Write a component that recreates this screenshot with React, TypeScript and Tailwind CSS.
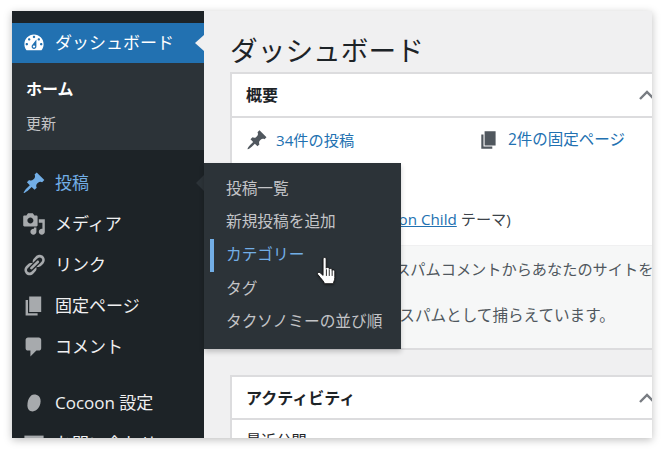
const fontStack = { fontFamily: '"Open Sans", "Noto Sans CJK JP", sans-serif' };

const ICONS: Record<string, string> = {
  dashboard:
    'M3.76 16h12.48c1.1-1.37 1.76-3.11 1.76-5 0-4.42-3.58-8-8-8s-8 3.58-8 8c0 1.89.66 3.63 1.76 5zM10 4c.55 0 1 .45 1 1s-.45 1-1 1-1-.45-1-1 .45-1 1-1zM6 6c.55 0 1 .45 1 1s-.45 1-1 1-1-.45-1-1 .45-1 1-1zm8 0c.55 0 1 .45 1 1s-.45 1-1 1-1-.45-1-1 .45-1 1-1zm-5.37 5.55L12 7v6c0 1.1-.9 2-2 2s-2-.9-2-2c0-.57.24-1.08.63-1.45zM4 10c.55 0 1 .45 1 1s-.45 1-1 1-1-.45-1-1 .45-1 1-1zm12 0c.55 0 1 .45 1 1s-.45 1-1 1-1-.45-1-1 .45-1 1-1zm-5 3c0-.55-.45-1-1-1s-1 .45-1 1 .45 1 1 1 1-.45 1-1z',
  post: 'M10.44 3.02l1.82-1.82 6.36 6.35-1.83 1.82c-1.05-.68-2.48-.57-3.41.36l-.75.75c-.92.93-1.04 2.35-.35 3.41l-1.83 1.82-2.41-2.41-2.8 2.79c-.42.42-3.38 2.71-3.8 2.29s1.86-3.39 2.28-3.81l2.79-2.79L4.1 9.36l1.83-1.82c1.05.69 2.48.57 3.4-.36l.75-.75c.93-.92 1.05-2.35.36-3.41z',
  media:
    'M13 11V4c0-.55-.45-1-1-1h-1.67L9 1H5L3.67 3H2c-.55 0-1 .45-1 1v7c0 .55.45 1 1 1h10c.55 0 1-.45 1-1zM7 4.5c1.38 0 2.5 1.12 2.5 2.5S8.38 9.5 7 9.5 4.5 8.38 4.5 7 5.62 4.5 7 4.5zM14 6h5v10.5c0 1.38-1.12 2.5-2.5 2.5S14 17.88 14 16.5s1.12-2.5 2.5-2.5c.17 0 .34.02.5.05V9h-3V6zm-4 8.05V13h2v3.5c0 1.38-1.12 2.5-2.5 2.5S7 17.88 7 16.5 8.12 14 9.5 14c.17 0 .34.02.5.05z',
  link: 'M17.74 2.76c1.68 1.69 1.68 4.41 0 6.1l-1.53 1.52c-1.12 1.12-2.7 1.47-4.14 1.09l2.62-2.61.76-.77.76-.76c.84-.84.84-2.2 0-3.04-.84-.85-2.2-.85-3.04 0l-.77.76-3.38 3.38c-.37-1.44-.02-3.02 1.1-4.14l1.52-1.53c1.69-1.68 4.42-1.68 6.1 0zM8.59 13.43l5.34-5.34c.42-.42.42-1.1 0-1.52-.44-.43-1.13-.39-1.53 0l-5.33 5.34c-.42.42-.42 1.1 0 1.52.44.43 1.13.39 1.52 0zm-.76 2.29l4.14-4.15c.38 1.44.03 3.02-1.09 4.14l-1.52 1.53c-1.69 1.68-4.41 1.68-6.1 0-1.68-1.68-1.68-4.42 0-6.1l1.53-1.52c1.12-1.12 2.7-1.47 4.14-1.1l-4.14 4.15c-.85.84-.85 2.2 0 3.05.84.84 2.2.84 3.04 0z',
  page: 'M6 15V2h10v13H6zm-1 1h8v2H3V5h2v11z',
  comment:
    'M5 2h9c1.1 0 2 .9 2 2v7c0 1.1-.9 2-2 2h-2l-5 5v-5H5c-1.1 0-2-.9-2-2V4c0-1.1.9-2 2-2z',
  circle: 'M10 3c3.5 0 5.5 2.2 5.5 5.6 0 4.4-3.2 8.4-6.6 8.4-2.9 0-4.4-2.3-4.4-5.2C4.500 7.200 7 3 10 3z',
  rect: 'M2 3h16v14H2z',
};

function Icon({ name, className }: { name: string; className: string }) {
  return (
    <svg viewBox="0 0 20 20" className={className} fill="currentColor">
      <path d={ICONS[name]} fillRule="evenodd" />
    </svg>
  );
}

function MenuRow({ icon, label, active }: { icon: string; label: string; active?: boolean }) {
  return (
    <div className={`flex items-center h-[41px] pl-[10px] text-[17px] ${active ? 'text-[#72aee6]' : 'text-[#f0f0f1]'}`}>
      <Icon name={icon} className={`w-[24px] h-[24px] mr-[9px] shrink-0 ${active ? 'text-[#72aee6]' : 'text-[#a7aaad]'}`} />
      <span className="whitespace-nowrap">{label}</span>
    </div>
  );
}

function Sidebar() {
  return (
    <aside className="w-[192px] shrink-0 bg-[#1d2327] pt-[12px]">
      <div className="relative flex items-center h-[40px] pl-[10px] bg-[#2271b1] text-white text-[17px]">
        <Icon name="dashboard" className="w-[24px] h-[24px] mr-[9px]" />
        <span className="whitespace-nowrap">ダッシュボード</span>
        <div className="absolute right-0 top-[12px] w-0 h-0 border-y-[8px] border-y-transparent border-r-[9px] border-r-[#f0f0f1]" />
      </div>
      <div className="h-[87px] bg-[#2c3338] pl-[14px] pt-[13px]">
        <div className="text-[16px] leading-[26px] font-bold text-white">ホーム</div>
        <div className="text-[15px] leading-[26px] mt-[8px] text-[#c3c4c7]">更新</div>
      </div>
      <div className="pt-[12px] relative">
        <MenuRow icon="post" label="投稿" active />
        <div className="absolute right-0 top-[25px] w-0 h-0 border-y-[8px] border-y-transparent border-r-[8px] border-r-[#2c3338]" />
        <MenuRow icon="media" label="メディア" />
        <MenuRow icon="link" label="リンク" />
        <MenuRow icon="page" label="固定ページ" />
        <MenuRow icon="comment" label="コメント" />
        <div className="h-[15px]" />
        <MenuRow icon="circle" label="Cocoon 設定" />
        <MenuRow icon="rect" label="お問い合わせ" />
      </div>
    </aside>
  );
}

function Flyout() {
  const rows = ['投稿一覧', '新規投稿を追加', 'カテゴリー', 'タグ', 'タクソノミーの並び順'];
  return (
    <div className="absolute left-[192px] top-[152px] w-[197px] h-[186px] bg-[#2c3338] pt-[9px] shadow-[0_3px_5px_rgba(0,0,0,0.2)]">
      {rows.map((row, i) => (
        <div
          key={row}
          className={`relative flex items-center h-[33.300px] pl-[22px] text-[15.700px] whitespace-nowrap ${
            i === 2 ? 'text-[#72aee6]' : 'text-[#c3c4c7]'
          }`}
        >
          {i === 2 && <div className="absolute left-[6px] top-0 w-[4px] h-full bg-[#72aee6]" />}
          {row}
        </div>
      ))}
    </div>
  );
}

function Cursor() {
  return (
    <svg viewBox="0 0 20 28" className="absolute left-[304px] top-[245px] w-[23px] h-[31px]" style={{ filter: 'drop-shadow(0 1px 1px rgba(0,0,0,0.4))' }}>
      <path
        d="M6 2.500c0-1.600 2.800-1.600 2.800 0V11c0-.9 2.600-1 2.700 0v1c0-.9 2.500-.9 2.600.2v1c.2-.9 2.400-.8 2.500.4v5.900c0 2.500-1 3.200-1.300 5.500H7.300c-.6-2-2.200-3.500-3.800-5.500L1.200 16.700c-.9-1.300.8-2.700 2-1.700L6 17.500z"
        fill="#fff"
        stroke="#111"
        strokeWidth="0.800"
        strokeLinejoin="round"
      />
      <path d="M9 12v6M11.600 12.500v5.500M14.200 13.500v4.500" stroke="#111" strokeWidth="0.800" />
    </svg>
  );
}

function CardHeader({ title, height }: { title: string; height: string }) {
  return (
    <div className={`flex items-center justify-between border-b-2 border-[#dcdcde] pl-[14px] ${height}`}>
      <span className="text-[16px] font-bold text-[#1d2327]">{title}</span>
      <svg viewBox="0 0 16 10" className="w-[16px] h-[10px] shrink-0 text-[#787c82]" fill="none" stroke="currentColor" strokeWidth="2.400">
        <path d="M1 9l7-7 7 7" />
      </svg>
    </div>
  );
}

function Main() {
  return (
    <main className="flex-1 min-w-0 bg-[#f0f0f1] pl-[26px] overflow-hidden">
      <h1 className="text-[27.700px] leading-[38px] pt-[20px] h-[61px] text-[#1d2327] whitespace-nowrap">ダッシュボード</h1>
      <section className="w-[425px] h-[278px] bg-white border-2 border-[#dcdcde] border-r-0 flex flex-col">
        <CardHeader title="概要" height="h-[44px]" />
        <div className="h-[127px] pl-[14px] pt-[10px] text-[15.200px]">
          <div className="flex h-[24px] items-center text-[#2271b1]">
            <div className="flex items-center w-[232px]">
              <Icon name="post" className="w-[22px] h-[22px] mr-[8px] text-[#50575e]" />
              34件の投稿
            </div>
            <div className="flex items-center text-[15.500px]">
              <Icon name="page" className="w-[22px] h-[22px] mr-[8px] text-[#50575e]" />
              2件の固定ページ
            </div>
          </div>
          <div className="mt-[56px] -ml-[6px] whitespace-nowrap text-[#3c434a]">
            WordPress 5.9.3 (<span className="text-[#2271b1] underline">Cocoon Child</span> テーマ)
          </div>
        </div>
        <div className="flex-1 bg-[#f6f7f7] border-t border-[#f0f0f1] pl-[14px] pt-[11px] text-[15.200px] text-[#50575e] whitespace-nowrap">
          <p className="leading-[24px]">Akismet は既に 1件のスパムコメントからあなたのサイトを保護しました。</p>
          <p className="leading-[24px] mt-[22px] text-[15.600px]">現在 1件のコメントをスパムとして捕らえています。</p>
        </div>
      </section>
      <section className="w-[425px] h-[120px] mt-[25px] bg-white border-t-2 border-l-2 border-[#dcdcde]">
        <CardHeader title="アクティビティ" height="h-[43px]" />
        <div className="pl-[14px] pt-[9px] text-[15.200px] text-[#1d2327]">最近公開</div>
      </section>
    </main>
  );
}

export default function App() {
  return (
    <div className="w-[664px] h-[451px] bg-white pl-[12px] pt-[11px] overflow-hidden" style={fontStack}>
      <div className="relative flex w-[640px] h-[427px] overflow-hidden shadow-[0_2px_8px_rgba(0,0,0,0.25)]">
        <Sidebar />
        <Main />
        <Flyout />
        <Cursor />
      </div>
    </div>
  );
}
